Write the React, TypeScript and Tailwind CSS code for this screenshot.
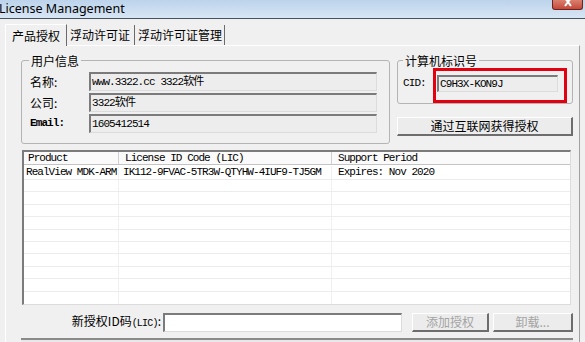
import React from 'react';

const cjk = "font-['Noto_Sans_CJK_SC',sans-serif]";
const mono = "font-['Liberation_Mono','Noto_Sans_CJK_SC',monospace]";

const sunken =
  'border-t-2 border-l-2 border-t-[#7b7b7b] border-l-[#7b7b7b] border-b border-r border-b-[#dcdcdc] border-r-[#dcdcdc]';
const raised =
  'border-t border-l border-t-white border-l-white border-b-2 border-r-2 border-b-[#6d6d6d] border-r-[#6d6d6d] bg-[#ececec]';

const Field: React.FC<{ label: string; value: string; labelMono?: boolean }> = ({ label, value, labelMono }) => (
  <div className="flex h-[19px] items-center">
    <div
      className={
        labelMono
          ? `w-[59px] ${mono} text-[11px] font-bold tracking-[-0.9px] text-black`
          : `w-[59px] ${cjk} text-[12px] leading-[14px] text-black`
      }
    >
      {label}
    </div>
    <div className={`h-[19px] w-[288px] bg-[#ededed] ${sunken} flex items-center pl-[1px]`}>
      <span className={`${mono} whitespace-nowrap text-[11px] tracking-[-0.9px] leading-[14px] text-black`}>{value}</span>
    </div>
  </div>
);

const rows = Array.from({ length: 10 });

export default function App() {
  return (
    <div className="relative flex h-[342px] w-[585px] flex-col overflow-hidden bg-[#f0f0f0]">
      {/* title bar */}
      <div className="flex h-[19px] shrink-0 items-start justify-between border-b border-b-[#46525e] bg-gradient-to-b from-[#bcd3eb] to-[#d8e6f4]">
        <span className="-ml-[1px] font-['Noto_Sans',sans-serif] text-[12.5px] leading-[17px] text-black">
          License Management
        </span>
        <div className="mr-[2px] flex h-[10px] w-[31px] items-end justify-center overflow-hidden rounded-b-[3px] border border-t-0 border-[#6e2419] bg-gradient-to-b from-[#d9806f] to-[#c5473a]">
          <svg width="10" height="8" viewBox="0 0 10 8" className="mb-[1px]">
            <path d="M2 -2 L8 6 M8 -2 L2 6" stroke="white" strokeWidth="2" />
          </svg>
        </div>
      </div>

      {/* tabs */}
      <div className={`flex h-[26px] shrink-0 items-end pl-[5px] ${cjk} text-[12px] text-black`}>
        <div className="relative z-10 -mb-[1px] flex h-[22px] w-[62px] items-center border-l border-t border-l-white border-t-white border-r border-r-[#6b6b6b] bg-[#f0f0f0] pl-[6px] leading-[14px]">
          产品授权
        </div>
        <div className="flex h-[20px] w-[68px] items-center border-r border-r-[#6b6b6b] pl-[3px] leading-[14px]">
          浮动许可证
        </div>
        <div className="flex h-[20px] w-[90px] items-center border-r border-r-[#6b6b6b] pl-[3px] leading-[14px]">
          浮动许可证管理
        </div>
      </div>

      {/* panel */}
      <div className="mx-[5px] flex-1 border-l border-t border-l-white border-t-white border-r border-r-[#a0a0a0] pl-[15px] pt-[8px]">
        <div className="flex gap-[7px]">
          {/* user info */}
          <fieldset className="h-[90px] w-[369px] rounded-[3px] border border-[#b4b4b4]">
            <legend className={`ml-[7px] px-[2px] ${cjk} text-[12px] leading-[13px] text-black`}>用户信息</legend>
            <div className="mt-[5px] flex flex-col gap-[2px] pl-[8px]">
              <Field label="名称:" value="www.3322.cc 3322软件" />
              <Field label="公司:" value="3322软件" />
              <Field label="Email:" value="1605412514" labelMono />
            </div>
          </fieldset>

          {/* right column */}
          <div className="relative flex w-[176px] flex-col">
            <fieldset className="h-[50px] rounded-[3px] border border-[#b4b4b4]">
              <legend className={`ml-[5px] px-[2px] ${cjk} text-[12px] leading-[13px] text-black`}>计算机标识号</legend>
              <div className="mt-[8px] flex items-center pl-[5px]">
                <span className={`w-[34px] ${mono} text-[11px] tracking-[-0.9px] text-black`}>CID:</span>
                <div className={`flex h-[17px] w-[121px] items-center bg-[#ededed] pl-[1px] ${sunken}`}>
                  <span className={`${mono} text-[11px] tracking-[-0.9px] leading-[13px] text-black`}>C9H3X-KON9J</span>
                </div>
              </div>
            </fieldset>
            <div className="pointer-events-none absolute left-[36px] top-[14px] h-[35px] w-[134px] border-[3px] border-[#e3000f]" />
            <button
              className={`mt-[13px] flex h-[19px] w-[176px] items-center justify-center ${raised} ${cjk} text-[12px] leading-[14px] text-black`}
            >
              通过互联网获得授权
            </button>
          </div>
        </div>

        {/* license table */}
        <div className={`ml-[1px] mt-[6px] w-[549px] bg-white ${sunken} ${mono} whitespace-nowrap text-[11px] tracking-[-0.95px] text-black`}>
          <div className="flex h-[13px] border-b border-b-[#c4c4c4] bg-[#fafafa] leading-[13px]">
            <div className="w-[95px] shrink-0 overflow-hidden border-r border-r-[#d0d0d0] pl-[4px]">Product</div>
            <div className="w-[213px] shrink-0 overflow-hidden border-r border-r-[#d0d0d0] pl-[6px]">License ID Code (LIC)</div>
            <div className="flex-1 pl-[6px]">Support Period</div>
          </div>
          <div className="flex h-[15px] items-center border-b border-b-[#ececec] leading-[13px]">
            <div className="w-[95px] shrink-0 overflow-hidden border-r border-r-[#f0f0f0] pl-[2px]">RealView MDK-ARM</div>
            <div className="w-[213px] shrink-0 overflow-hidden border-r border-r-[#f0f0f0] pl-[4px]">IK112-9FVAC-5TR3W-QTYHW-4IUF9-TJ5GM</div>
            <div className="flex-1 pl-[6px]">Expires: Nov 2020</div>
          </div>
          {rows.map((_, i) => (
            <div key={i} className="flex h-[12.4px] border-b border-b-[#ececec] last:border-b-0">
              <div className="w-[95px] shrink-0 border-r border-r-[#f0f0f0]" />
              <div className="w-[213px] shrink-0 border-r border-r-[#f0f0f0]" />
              <div className="flex-1" />
            </div>
          ))}
        </div>

        {/* new license */}
        <div className="mt-[8px] flex h-[19px] items-center">
          <span className={`w-[142px] whitespace-nowrap pr-[2px] text-right ${cjk} text-[12px] leading-[14px] text-black`}>
            新授权ID码<span className={`${mono} text-[10px] tracking-[-0.8px]`}>(LIC)</span>:
          </span>
          <div className={`h-[19px] w-[239px] bg-white ${sunken}`} />
          <button
            className={`ml-[10px] flex h-[19px] w-[77px] items-center justify-center ${raised} ${cjk} text-[12px] leading-[14px] text-[#a3a3a3]`}
          >
            添加授权
          </button>
          <button
            className={`ml-[4px] flex h-[19px] w-[80px] items-center justify-center ${raised} ${cjk} text-[12px] leading-[14px] text-[#a3a3a3]`}
          >
            卸载...
          </button>
        </div>

        <div className="mt-[6px] h-[4px] w-[552px] border-t-2 border-t-[#8a8a8a] bg-[#e8e8e8]" />
      </div>
    </div>
  );
}
